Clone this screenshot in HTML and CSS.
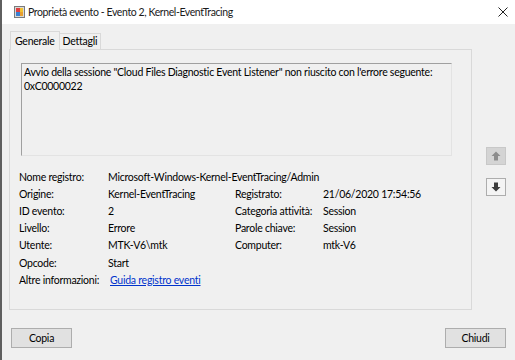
FILE: index.html
```html
<!DOCTYPE html>
<html lang="it">
<head>
    <meta charset="UTF-8">
    <title>Proprietà evento</title>
    <link rel="stylesheet" href="styles.css">
</head>
<body>
    <div class="window">
        <div class="titlebar">
            <svg class="app-icon" width="11" height="12" viewBox="0 0 11 12">
                <rect x="0.5" y="0.5" width="10" height="11" fill="#d9d9d9" stroke="#7a7a7a"/>
                <rect x="2" y="2" width="4" height="4" fill="#e04040"/>
                <rect x="6" y="2" width="3" height="4" fill="#f2c230"/>
                <rect x="2" y="6" width="4" height="4" fill="#3a7fd0"/>
                <rect x="6" y="6" width="3" height="4" fill="#e9a030"/>
            </svg>
            <span class="title">Proprietà evento - Evento 2, Kernel-EventTracing</span>
            <svg class="close" width="10" height="10" viewBox="0 0 10 10">
                <path d="M0.5 0.5 L9.5 9.5 M9.5 0.5 L0.5 9.5" stroke="#222" stroke-width="1"/>
            </svg>
        </div>

        <div class="content">
            <div class="tabs">
                <div class="tab active">Generale</div>
                <div class="tab">Dettagli</div>
            </div>
            <div class="main">
                <div class="panel">
                    <div class="message">Avvio della sessione "Cloud Files Diagnostic Event Listener" non riuscito con l'errore seguente:<br>0xC0000022</div>
                    <div class="fields">
                        <span>Nome registro:</span><span class="wide">Microsoft-Windows-Kernel-EventTracing/Admin</span>
                        <span>Origine:</span><span>Kernel-EventTracing</span><span>Registrato:</span><span>21/06/2020 17:54:56</span>
                        <span>ID evento:</span><span>2</span><span>Categoria attività:</span><span>Session</span>
                        <span>Livello:</span><span>Errore</span><span>Parole chiave:</span><span>Session</span>
                        <span>Utente:</span><span>MTK-V6\mtk</span><span>Computer:</span><span>mtk-V6</span>
                        <span>Opcode:</span><span class="wide">Start</span>
                        <span>Altre informazioni:</span><span class="wide"><a href="#" class="link">Guida registro eventi</a></span>
                    </div>
                </div>
                <div class="nav">
                    <div class="arrow up">
                        <svg width="10" height="10" viewBox="0 0 10 10"><path d="M5 0.5 L9.5 5 L7 5 L7 9.5 L3 9.5 L3 5 L0.5 5 Z" fill="#8c8c8c"/></svg>
                    </div>
                    <div class="arrow down">
                        <svg width="10" height="10" viewBox="0 0 10 10"><path d="M5 9.5 L9.5 5 L7 5 L7 0.5 L3 0.5 L3 5 L0.5 5 Z" fill="#3c3c3c"/></svg>
                    </div>
                </div>
            </div>
            <div class="buttons">
                <button type="button">Copia</button>
                <button type="button">Chiudi</button>
            </div>
        </div>
    </div>
</body>
</html>
```

FILE: styles.css
```css
body {
    margin: 0;
    font-family: Lato, "Noto Sans", sans-serif;
    font-size: 10.5px;
    letter-spacing: -0.25px;
    color: #000;
    background-color: #f0f0f0;
}
.window {
    width: 513px;
    height: 360px;
    border-left: 2px solid #5f5f5f;
    background-color: #f0f0f0;
    overflow: hidden;
}
.titlebar {
    height: 24px;
    background-color: #fff;
    display: flex;
    align-items: center;
    padding-left: 12px;
}
.app-icon {
    margin-right: 3px;
}
.title {
    color: #1a1a1a;
    letter-spacing: -0.4px;
}
.close {
    margin-left: auto;
    margin-right: 7px;
}
.content {
    padding: 7px 9px 0 7px;
}
.tabs {
    display: flex;
    align-items: flex-end;
    height: 18px;
    padding-left: 1px;
}
.tab {
    height: 15px;
    line-height: 14px;
    padding: 0 3px;
    border: 1px solid #d9d9d9;
    border-bottom: none;
    border-left: none;
    background-color: #f0f0f0;
}
.tab.active {
    height: 18px;
    line-height: 18px;
    padding: 0 4px;
    border-left: 1px solid #d9d9d9;
    background-color: #f0f0f0;
    position: relative;
    top: 1px;
}
.main {
    display: flex;
}
.panel {
    width: 463px;
    height: 261px;
    border: 1px solid #d9d9d9;
    padding: 13px 0 0 11px;
    box-sizing: border-box;
}
.message {
    width: 431px;
    height: 93px;
    box-sizing: border-box;
    border-top: 1px solid #a0a0a0;
    border-left: 1px solid #a0a0a0;
    border-right: 1px solid #e3e3e3;
    border-bottom: 1px solid #e3e3e3;
    padding: 1px 2px;
    line-height: 14px;
}
.fields {
    display: grid;
    grid-template-columns: 89px 127px 88px auto;
    grid-auto-rows: 17.2px;
    align-items: center;
    margin-top: 12px;
    margin-left: -2px;
}
.fields .wide {
    grid-column: span 3;
}
.link {
    color: #0033cc;
    margin-left: 2px;
}
.nav {
    display: flex;
    flex-direction: column;
    padding: 98px 0 0 14px;
    gap: 13px;
}
.arrow {
    width: 20px;
    height: 18px;
    box-sizing: border-box;
    display: flex;
    align-items: center;
    justify-content: center;
}
.arrow.up {
    background-color: #d4d4d4;
    border: 1px solid #c8c8c8;
}
.arrow.down {
    background-color: #f4f4f4;
    border: 1px solid #adadad;
}
.buttons {
    display: flex;
    justify-content: space-between;
    padding: 18px 0 0 2px;
}
button {
    width: 61px;
    height: 20px;
    padding: 0;
    border: 1px solid #adadad;
    background-color: #e1e1e1;
    font-family: inherit;
    font-size: 10.5px;
    letter-spacing: -0.25px;
    color: #000;
}
```
